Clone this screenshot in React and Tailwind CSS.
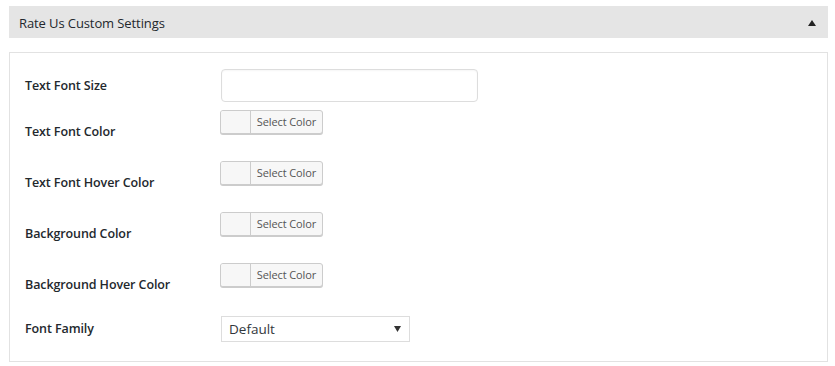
import React from "react";

const font = { fontFamily: '"Open Sans", "Noto Sans", sans-serif' };

function ColorButton() {
  return (
    <div className="flex h-[24px] w-[103px] rounded-[3px] border border-[#cccccc] bg-[#f7f7f7] shadow-[0_1px_0_#cccccc] overflow-hidden">
      <div className="w-[30px] h-full bg-[#f7f7f7] border-r border-[#cccccc]" />
      <div className="flex-1 flex items-center justify-center text-[11px] text-[#555555] tracking-[-0.1px]">
        Select Color
      </div>
    </div>
  );
}

function Label({ children, className = "" }) {
  return (
    <div className={`w-[211px] shrink-0 pl-[15px] text-[12.5px] font-semibold text-[#23282d] leading-[18px] tracking-[-0.1px] ${className}`}>
      {children}
    </div>
  );
}

export default function App() {
  return (
    <div className="w-[835px] h-[366px] bg-white pt-[6px] pl-[9px]" style={font}>
      <div className="w-[819px]">
        <div className="h-[32px] bg-[#e5e5e5] flex items-center justify-between pl-[10px] pr-[12px]">
          <span className="text-[13px] text-[#23282d] tracking-[-0.1px] mt-[3px]">Rate Us Custom Settings</span>
          <svg width="8" height="6" viewBox="0 0 8 6" className="mt-[1px]">
            <polygon points="4,0 8,6 0,6" fill="#222" />
          </svg>
        </div>
        <div className="mt-[14px] border border-[#e2e2e2] bg-white pt-[16px] pb-[19px]">
          <div className="flex items-center h-[33px] mb-[8px]">
            <Label>Text Font Size</Label>
            <div className="w-[257px] h-[33px] rounded-[4px] border border-[#dddddd] bg-white shadow-[inset_0_1px_2px_rgba(0,0,0,0.04)]" />
          </div>
          {["Text Font Color", "Text Font Hover Color", "Background Color", "Background Hover Color"].map((t) => (
            <div key={t} className="flex items-start h-[51px]">
              <Label className="mt-[13px]">{t}</Label>
              <div className="ml-[-1px]">
                <ColorButton />
              </div>
            </div>
          ))}
          <div className="flex items-center h-[26px] mt-[2px]">
            <Label>Font Family</Label>
            <div className="w-[189px] h-[26px] border border-[#dddddd] bg-white flex items-center justify-between pl-[7px] pr-[8px]">
              <span className="text-[13.5px] text-[#32373c]">Default</span>
              <svg width="7" height="6" viewBox="0 0 7 6">
                <polygon points="0,0 7,0 3.5,6" fill="#333" />
              </svg>
            </div>
          </div>
        </div>
      </div>
    </div>
  );
}
